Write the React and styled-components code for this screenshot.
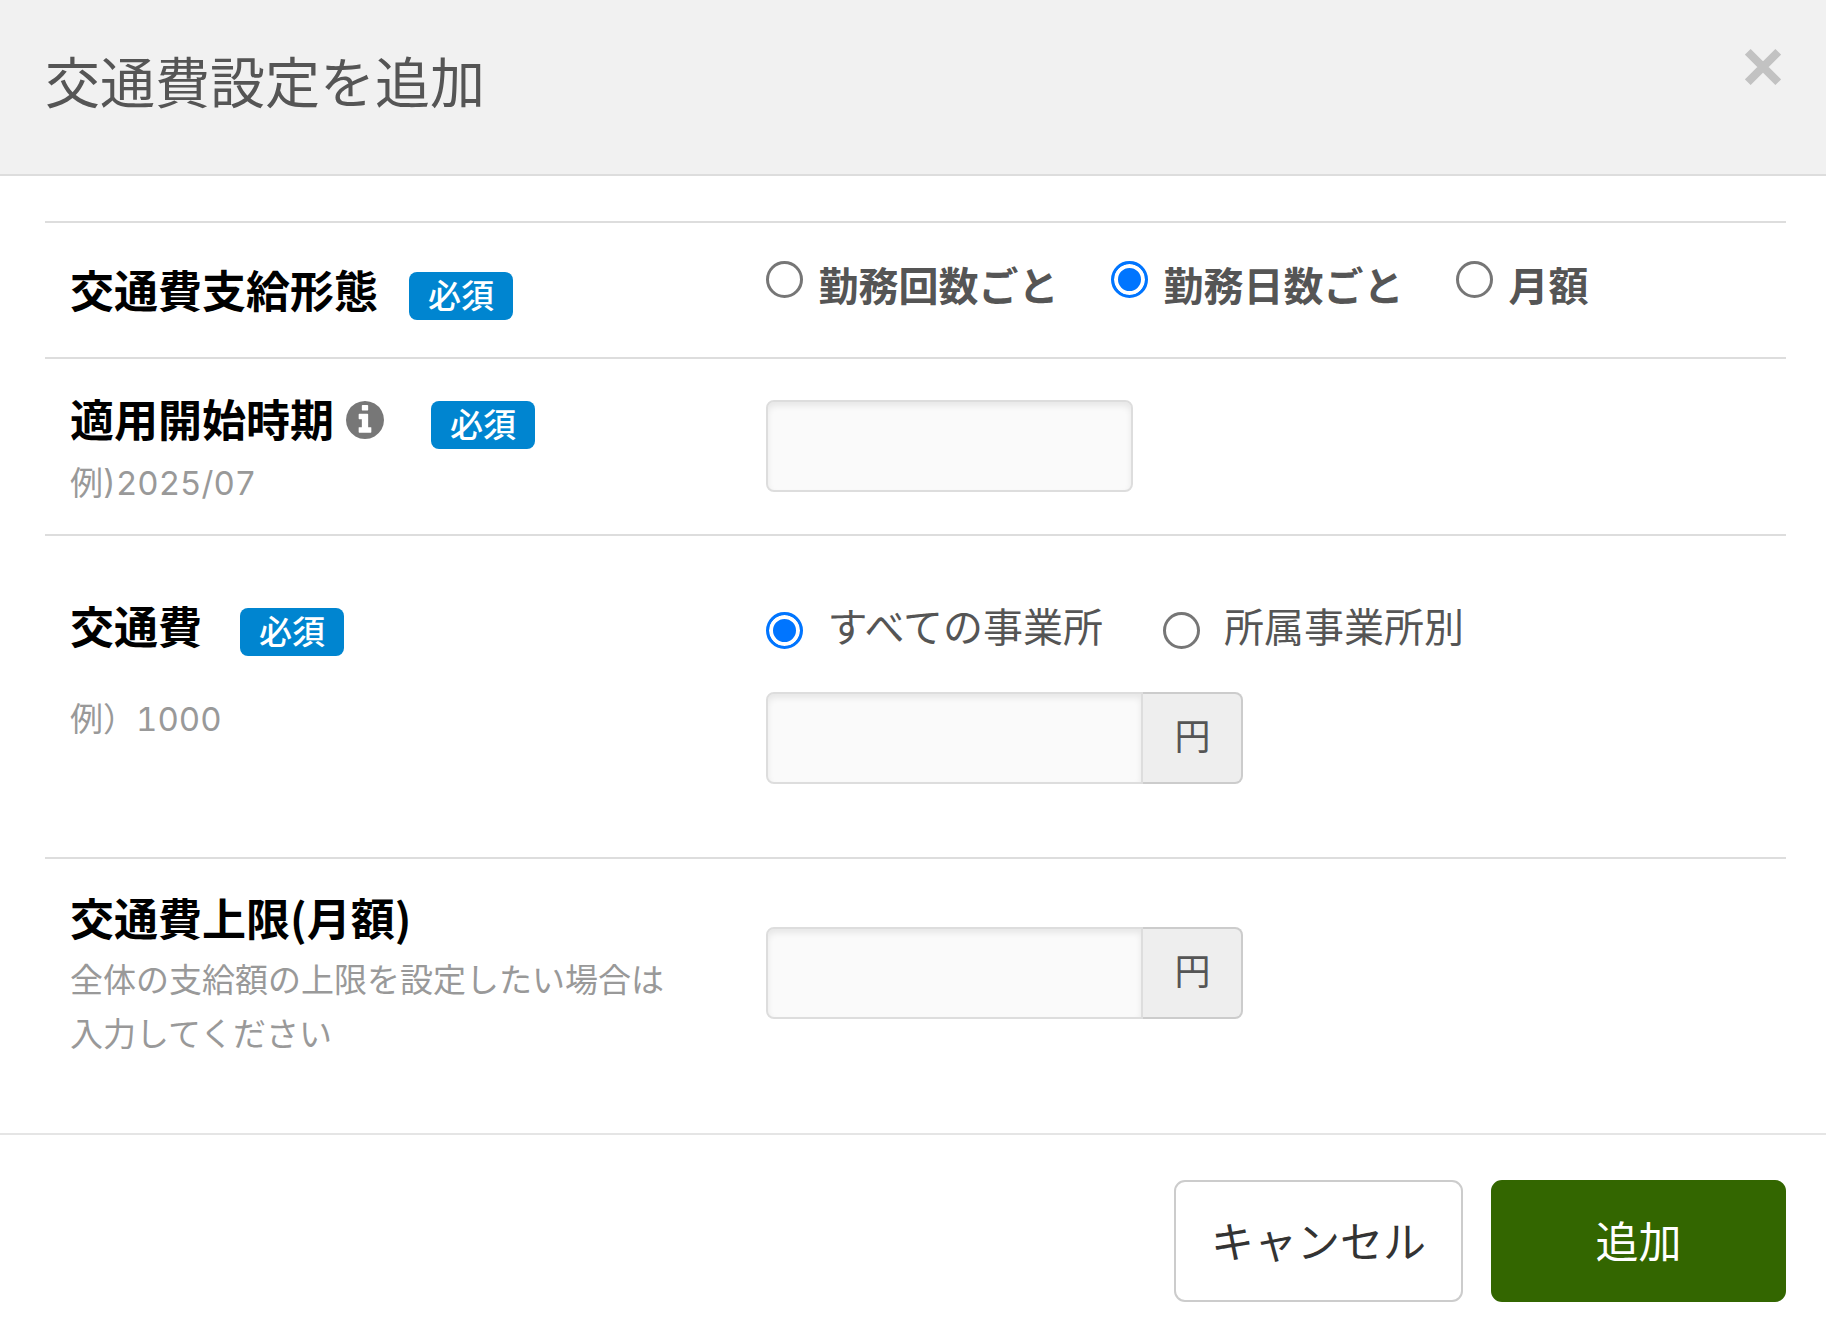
import React, { useState } from "react";
import styled, { createGlobalStyle } from "styled-components";

const GlobalStyle = createGlobalStyle`
  *, *::before, *::after { box-sizing: border-box; }
  body {
    margin: 0;
    background: #fff;
    color: #555;
    font-family: "Noto Sans CJK JP", sans-serif;
  }
  button, input { font: inherit; color: inherit; }
`;

const Dialog = styled.form`
  width: 100%;
`;

const Header = styled.header`
  display: flex;
  justify-content: space-between;
  align-items: flex-start;
  padding: 49px 45px 64px;
  background: #f1f1f1;
  border-bottom: 2px solid #ddd;
`;

const Title = styled.h1`
  margin: 0;
  font-size: 55px;
  font-weight: 400;
  line-height: 61px;
`;

const CloseButton = styled.button`
  display: flex;
  padding: 0;
  border: 0;
  background: none;
  color: #c2c2c2;
  cursor: pointer;
`;

const Body = styled.div`
  padding: 45px 40px 72px 45px;
`;

const Row = styled.div`
  display: grid;
  grid-template-columns: 2fr 3fr;
  border-top: 2px solid #ddd;
`;

const Cell = styled.div`
  min-width: 0;
  padding: ${(p) => p.$top}px 25px ${(p) => p.$bottom || 0}px;
`;

const Heading = styled.div`
  display: flex;
  align-items: center;
  gap: 12px;
  height: 60px;
  color: #000;
  font-size: 44px;
  font-weight: 700;
  line-height: 60px;

  svg { margin-top: 4px; }
`;

const Required = styled.span`
  margin: 14px 0 0 ${(p) => p.$gap}px;
  padding: 0 19px 4px;
  border-radius: 8px;
  background: #0085d0;
  color: #fff;
  font-size: 33px;
  font-weight: 500;
  line-height: 44px;
`;

const Hint = styled.p`
  margin: ${(p) => p.$gap}px 0 0;
  color: #999;
  font-family: Inter, "Noto Sans CJK JP", sans-serif;
  font-size: 33px;
  font-variant-numeric: tabular-nums;
  line-height: 54px;
`;

const Options = styled.div`
  display: flex;
  flex-wrap: wrap;
  column-gap: ${(p) => p.$gap}px;
`;

const Option = styled.label`
  display: flex;
  align-items: center;
  gap: ${(p) => (p.$strong ? 15 : 24)}px;
  font-size: 40px;
  font-weight: ${(p) => (p.$strong ? 700 : 400)};
  line-height: 60px;
  cursor: pointer;

  input { margin: ${(p) => (p.$strong ? "0 0 10px" : "10px 0 0")}; }
`;

const Radio = styled.input`
  appearance: none;
  flex: none;
  width: 37px;
  height: 37px;
  border: 3px solid #767676;
  border-radius: 50%;
  background: #fff;

  &:checked {
    border-color: #0075ff;
    background: #0075ff;
    box-shadow: inset 0 0 0 4px #fff;
  }
`;

const TextInput = styled.input`
  display: block;
  width: ${(p) => p.$width}px;
  height: 92px;
  padding: 0 20px;
  border: 2px solid #ddd;
  border-radius: 8px;
  background: #fafafa;
  box-shadow: inset 0 4px 6px rgba(0, 0, 0, 0.08);
  font-size: 36px;
`;

const InputGroup = styled.div`
  display: flex;
  width: 477px;
  margin-top: ${(p) => p.$gap || 0}px;

  input {
    flex: 1;
    min-width: 0;
    border-radius: 8px 0 0 8px;
  }
`;

const Unit = styled.span`
  display: flex;
  align-items: center;
  justify-content: center;
  width: 100px;
  padding-bottom: 8px;
  border: 2px solid #ccc;
  border-left: 0;
  border-radius: 0 8px 8px 0;
  background: #eee;
  font-size: 36px;
`;

const Footer = styled.footer`
  display: flex;
  justify-content: flex-end;
  gap: 28px;
  padding: 45px 40px 36px;
  border-top: 2px solid #e5e5e5;
`;

const Button = styled.button`
  min-width: ${(p) => (p.$primary ? 295 : 289)}px;
  height: 122px;
  padding: 0 34px 4px;
  border: 2px solid ${(p) => (p.$primary ? "#360" : "#ccc")};
  border-radius: 11px;
  background: ${(p) => (p.$primary ? "#360" : "#fff")};
  color: ${(p) => (p.$primary ? "#fff" : "#333")};
  font-size: 43px;
  line-height: 60px;
  cursor: pointer;
`;

const CloseIcon = () => (
  <svg width="36" height="36" viewBox="0 0 36 36" aria-hidden="true">
    <path d="M2.8 2.8 33.2 33.2M33.2 2.8 2.8 33.2" stroke="currentColor" strokeWidth="8" />
  </svg>
);

const InfoIcon = () => (
  <svg width="38" height="38" viewBox="128 128 1536 1536" fill="#777" role="img" aria-label="info">
    <path d="M1152 1376v-160q0-14-9-23t-23-9h-96v-512q0-14-9-23t-23-9h-320q-14 0-23 9t-9 23v160q0 14 9 23t23 9h96v320h-96q-14 0-23 9t-9 23v160q0 14 9 23t23 9h448q14 0 23-9t9-23zm-128-896v-160q0-14-9-23t-23-9h-192q-14 0-23 9t-9 23v160q0 14 9 23t23 9h192q14 0 23-9t9-23zm640 416q0 209-103 385.500t-279.500 279.500-385.500 103-385.500-103-279.500-279.500-103-385.500 103-385.500 279.500-279.500 385.500-103 385.500 103 279.500 279.500 103 385.500z" />
  </svg>
);

function RadioOptions({ name, labelledBy, options, initial, strong, gap }) {
  const [value, setValue] = useState(initial);
  return (
    <Options role="radiogroup" aria-labelledby={labelledBy} $gap={gap}>
      {options.map((text) => (
        <Option key={text} $strong={strong}>
          <Radio type="radio" name={name} checked={value === text} onChange={() => setValue(text)} />
          {text}
        </Option>
      ))}
    </Options>
  );
}

export default function App() {
  return (
    <>
      <GlobalStyle />
      <Dialog onSubmit={(e) => e.preventDefault()}>
        <Header>
          <Title>交通費設定を追加</Title>
          <CloseButton type="button" aria-label="閉じる">
            <CloseIcon />
          </CloseButton>
        </Header>
        <Body>
          <Row>
            <Cell $top={36} $bottom={38}>
              <Heading>
                <span id="type-label">交通費支給形態</span>
                <Required $gap={19}>必須</Required>
              </Heading>
            </Cell>
            <Cell $top={31}>
              <RadioOptions
                name="type"
                labelledBy="type-label"
                options={["勤務回数ごと", "勤務日数ごと", "月額"]}
                initial="勤務日数ごと"
                strong
                gap={53}
              />
            </Cell>
          </Row>
          <Row>
            <Cell $top={29} $bottom={24}>
              <Heading>
                <label htmlFor="start">適用開始時期</label>
                <InfoIcon />
                <Required $gap={35}>必須</Required>
              </Heading>
              <Hint $gap={8}>例)2025/07</Hint>
            </Cell>
            <Cell $top={41}>
              <TextInput id="start" type="text" $width={367} />
            </Cell>
          </Row>
          <Row>
            <Cell $top={59}>
              <Heading>
                <label id="cost-label" htmlFor="cost">交通費</label>
                <Required $gap={26}>必須</Required>
              </Heading>
              <Hint $gap={37}>例）1000</Hint>
            </Cell>
            <Cell $top={59} $bottom={73}>
              <RadioOptions
                name="scope"
                labelledBy="cost-label"
                options={["すべての事業所", "所属事業所別"]}
                initial="すべての事業所"
                gap={60}
              />
              <InputGroup $gap={37}>
                <TextInput id="cost" type="text" />
                <Unit>円</Unit>
              </InputGroup>
            </Cell>
          </Row>
          <Row>
            <Cell $top={28}>
              <Heading>
                <label htmlFor="limit">交通費上限(月額)</label>
              </Heading>
              <Hint $gap={6}>
                全体の支給額の上限を設定したい場合は
                <br />
                入力してください
              </Hint>
            </Cell>
            <Cell $top={68}>
              <InputGroup>
                <TextInput id="limit" type="text" />
                <Unit>円</Unit>
              </InputGroup>
            </Cell>
          </Row>
        </Body>
        <Footer>
          <Button type="button">キャンセル</Button>
          <Button type="submit" $primary>追加</Button>
        </Footer>
      </Dialog>
    </>
  );
}
